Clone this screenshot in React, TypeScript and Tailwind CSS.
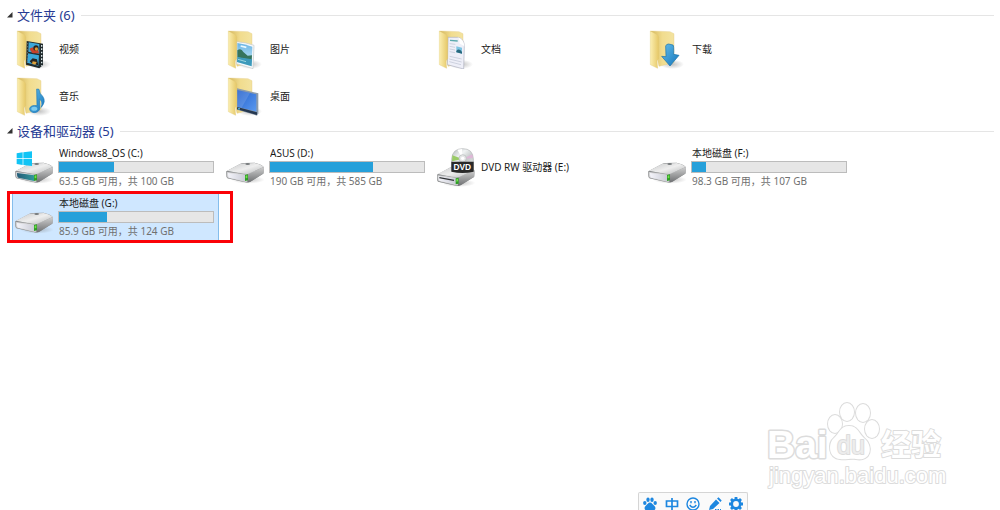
import { useState, type ReactNode } from "react";
import clsx from "clsx";

interface Folder {
  name: string;
  overlay: ReactNode;
}

interface Drive {
  name: string;
  kind: "system" | "disk" | "dvd";
  usedPercent?: number;
  caption?: string;
  marked?: boolean;
}

const VideoOverlay = (
  <g>
    <path d="M35 36 84 44V108L73 118 33 107Z" fill="#202a2c" />
    <path d="M41 40 73 45V74L40 68Z" fill="#3ba8da" />
    <path d="M39 73 72 79 70 110 36 101Z" fill="#3ba8da" />
    <path d="M43 59 53 55 61 60 68 54 72 73 53 73 47 66Z" fill="#c6422c" />
    <circle cx="63" cy="57" r="8" fill="#2a2420" />
    <circle cx="64" cy="60" r="5" fill="#e0992e" />
    <path d="M44 97 53 88 66 91 70 109 51 104Z" fill="#252422" />
    <path d="M53 97 65 99 61 107 51 104Z" fill="#dda13b" />
    <path d="M80 48V110" stroke="#d9e5e8" strokeWidth="4" strokeDasharray="5 5" />
    <path d="M37 42V102" stroke="#637073" strokeWidth="3" strokeDasharray="4 5" />
  </g>
);

const PictureOverlay = (
  <g>
    <path d="M32 38Q60 40 84 49L81 119 31 104Z" fill="#f7f9fa" stroke="#c2c8cc" strokeWidth="2" />
    <path d="M34 42Q58 45 79 53L77 112 33 99Z" fill="url(#sky)" />
    <path d="M34 64Q45 55 52 69L65 80 78 79 77 94 34 85Z" fill="#36745d" />
    <path d="M34 84 78 91 77 112 33 99Z" fill="#3d9abb" />
    <path d="M36 91 60 98" stroke="#9bd6df" strokeWidth="3" />
    <path d="M44 51 61 55" stroke="#e9f8ff" strokeWidth="5" />
  </g>
);

const DocumentOverlay = (
  <g>
    <path d="M33 25H62Q82 29 82 52L80 120 31 107Z" fill="#eeeff8" stroke="#adb1bf" strokeWidth="2" />
    <path d="M62 25Q70 35 67 43L82 52Q80 30 62 25Z" fill="#fff" />
    <path d="M39 34 62 36" stroke="#5ba9ad" strokeWidth="4" />
    <path
      d="M38 44 55 46M38 52 54 55M38 60 54 63M38 68 54 71M38 82 74 90M37 90 74 99M37 98 72 107"
      stroke="#bcc2d2"
      strokeWidth="2"
    />
    <path d="M58 52 75 56V74L58 70Z" fill="#7fc4e2" />
    <path d="M58 66Q66 56 75 69V74L58 70Z" fill="#28687d" />
  </g>
);

const DownloadOverlay = (
  <path
    d="M53 51Q55 45 62 45L75 48Q78 50 77 76L93 79 66 111 41 82 54 83Z"
    fill="url(#arrow)"
    stroke="#176fa8"
    strokeWidth="2"
  />
);

const MusicOverlay = (
  <g fill="url(#arrow)" stroke="#1b78b8" strokeWidth="2">
    <path d="M65 39 72 40Q73 53 83 61Q94 76 79 94Q84 75 73 69L75 97Q71 110 57 110Q43 108 44 97Q48 86 66 89Z" />
    <ellipse cx="58" cy="98" rx="9" ry="6" fill="#7dcbee" stroke="none" />
  </g>
);

const DesktopOverlay = (
  <g>
    <path d="M33 37 97 52V112L93 119 33 101Z" fill="#8c9bab" />
    <path d="M34 42 91 55V107L34 92Z" fill="url(#screen)" />
    <path d="M34 42 72 51 47 95 34 92Z" fill="#fff" opacity=".13" />
    <path d="M34 93 93 109V117L33 100Z" fill="#263850" />
    <circle cx="39" cy="98" r="3" fill="#4cafd8" />
  </g>
);

const folders: Folder[] = [
  { name: "视频", overlay: VideoOverlay },
  { name: "图片", overlay: PictureOverlay },
  { name: "文档", overlay: DocumentOverlay },
  { name: "下载", overlay: DownloadOverlay },
  { name: "音乐", overlay: MusicOverlay },
  { name: "桌面", overlay: DesktopOverlay },
];

const drives: Drive[] = [
  { name: "Windows8_OS (C:)", kind: "system", usedPercent: 36, caption: "63.5 GB 可用，共 100 GB" },
  { name: "ASUS (D:)", kind: "disk", usedPercent: 67, caption: "190 GB 可用，共 585 GB" },
  { name: "DVD RW 驱动器 (E:)", kind: "dvd" },
  { name: "本地磁盘 (F:)", kind: "disk", usedPercent: 9, caption: "98.3 GB 可用，共 107 GB" },
  { name: "本地磁盘 (G:)", kind: "disk", usedPercent: 31, caption: "85.9 GB 可用，共 124 GB", marked: true },
];

// Gradients shared by all the icons
function IconDefs() {
  return (
    <svg className="absolute size-0" aria-hidden="true">
      <defs>
        <linearGradient id="flap">
          <stop offset="0" stopColor="#fbeeb0" />
          <stop offset="1" stopColor="#e6c867" />
        </linearGradient>
        <linearGradient id="back">
          <stop offset="0" stopColor="#d5b75b" />
          <stop offset=".5" stopColor="#f1dc8e" />
          <stop offset="1" stopColor="#f3e3a0" />
        </linearGradient>
        <linearGradient id="sky" x2="0" y2="1">
          <stop offset="0" stopColor="#68b4e5" />
          <stop offset="1" stopColor="#d5eff7" />
        </linearGradient>
        <linearGradient id="arrow" y2="1">
          <stop offset="0" stopColor="#63bdea" />
          <stop offset="1" stopColor="#1677bd" />
        </linearGradient>
        <linearGradient id="screen" y2="1">
          <stop offset="0" stopColor="#2460cc" />
          <stop offset="1" stopColor="#5b9af0" />
        </linearGradient>
        <linearGradient id="metalTop" x2="1" y2="1">
          <stop offset="0" stopColor="#c5c6c7" />
          <stop offset=".5" stopColor="#eeeeee" />
          <stop offset="1" stopColor="#b2b4b5" />
        </linearGradient>
        <linearGradient id="metalSide" x2="0" y2="1">
          <stop offset="0" stopColor="#d0d0d0" />
          <stop offset="1" stopColor="#6e7072" />
        </linearGradient>
        <linearGradient id="panel">
          <stop offset="0" stopColor="#f4f4fa" />
          <stop offset="1" stopColor="#c9cbd5" />
        </linearGradient>
        <linearGradient id="panelTeal">
          <stop offset="0" stopColor="#245c78" />
          <stop offset="1" stopColor="#31999b" />
        </linearGradient>
        <linearGradient id="disc" x2="1" y2="1">
          <stop offset="0" stopColor="#aeb4b6" />
          <stop offset=".35" stopColor="#f1f4f4" />
          <stop offset=".6" stopColor="#c5caca" />
          <stop offset="1" stopColor="#f0f0f0" />
        </linearGradient>
        <radialGradient id="shade">
          <stop offset="0" stopColor="#777" stopOpacity=".45" />
          <stop offset="1" stopColor="#777" stopOpacity="0" />
        </radialGradient>
      </defs>
    </svg>
  );
}

function FolderIcon({ children }: { children: ReactNode }) {
  return (
    <svg viewBox="0 0 120 120" className="size-10 shrink-0" aria-hidden="true">
      <ellipse cx="72" cy="106" rx="36" ry="14" fill="url(#shade)" />
      <path d="M8 6 66 8 78 14V101L33 112Z" fill="url(#back)" stroke="#e0c678" strokeWidth="1" />
      {children}
      <path d="M7 6 28 17Q32 20 32 26V90L27 94 29 118 7 107Z" fill="url(#flap)" stroke="#dfc471" strokeWidth="1" />
    </svg>
  );
}

function DriveBody({ teal }: { teal?: boolean }) {
  return (
    <g>
      <ellipse cx="66" cy="98" rx="50" ry="12" fill="url(#shade)" />
      <path d="M1 73 42 51Q46 48 54 48L86 47Q108 52 114 61L112 80 72 105Q66 108 59 106L4 94Q0 91 1 73Z" fill="#898b8d" />
      <path d="M64 81 114 60 113 79 73 104 64 106Z" fill="url(#metalSide)" />
      <path d="M3 71 43 50 86 48Q105 52 113 60L66 81Q61 83 55 82Z" fill="url(#metalTop)" />
      <ellipse cx="65" cy="51" rx="7" ry="3" fill="#777b7d" />
      <path d="M2 74Q25 76 65 83L64 105Q60 106 53 104L6 93Q1 91 2 74Z" fill="#d8d8da" stroke="#808284" strokeWidth="1" />
      <path d="M6 78 58 85 57 102 10 92Q6 91 6 78Z" fill={teal ? "url(#panelTeal)" : "url(#panel)"} />
      <path d="M57 84 66 82V100L57 102Z" fill="#2e9d25" />
      <path d="M59 86 64 85V93L59 94Z" fill="#72e04d" />
    </g>
  );
}

function DriveIcon({ kind }: { kind: Drive["kind"] }) {
  return (
    <svg viewBox="0 0 120 120" className="size-10 shrink-0" aria-hidden="true">
      {kind === "dvd" ? (
        <>
          <g transform="translate(-1 10)">
            <DriveBody />
            <path d="M8 82 52 90" stroke="#2f3234" strokeWidth="4" />
          </g>
          <path d="M44 36Q46 5 77 5T109 36V70H44Z" fill="url(#disc)" stroke="#aeb1b2" strokeWidth="2" />
          <path d="M77 36 46 25 45 43Z" fill="#9acb67" />
          <path d="M77 36 61 8 75 6Z" fill="#fff" />
          <path d="M77 36 106 22 108 33Z" fill="#dfb7d7" />
          <circle cx="77" cy="34" r="11" fill="#e5e7e7" stroke="#b5b9ba" strokeWidth="2" />
          <circle cx="77" cy="34" r="5" fill="#fff" />
          <path d="M43 44H110V74Q76 82 43 74Z" fill="#292929" />
          <text x="76" y="69" textAnchor="middle" fill="#fff" className="font-['Liberation_Sans'] text-[25px] font-bold">
            DVD
          </text>
        </>
      ) : (
        <>
          <DriveBody teal={kind === "system"} />
          {kind === "system" && (
            <path d="M5 19 23 16V34H5ZM25 16 51 13V34H25ZM5 36H23V54L5 51ZM25 36H51V57L25 54Z" fill="#11c4f5" />
          )}
        </>
      )}
    </svg>
  );
}

function Section({ title, children }: { title: string; children: ReactNode }) {
  const [open, setOpen] = useState(true);

  return (
    <section>
      <h2 className="flex h-[22px] items-center gap-1.5 pr-1.5">
        <button
          type="button"
          aria-expanded={open}
          onClick={() => setOpen(!open)}
          className="flex items-center gap-1 text-[13px] leading-5 text-[#263a93]"
        >
          <svg viewBox="0 0 6 6" className={clsx("size-1.5", !open && "-rotate-45")} aria-hidden="true">
            <path d="M5.5 0V5.5H0Z" fill="#333" />
          </svg>
          {title}
        </button>
        <span className="h-px flex-1 bg-[#e5e5e5]" />
      </h2>
      {open && children}
    </section>
  );
}

function DriveTile({ drive, selected, onSelect }: { drive: Drive; selected: boolean; onSelect: () => void }) {
  return (
    <div className="relative mr-1">
      <button
        type="button"
        onClick={onSelect}
        className={clsx(
          "flex h-12 w-full items-center gap-1 border pl-0.5 text-left",
          selected ? "border-[#84bdec] bg-[#cfe7ff]" : "border-transparent"
        )}
      >
        <DriveIcon kind={drive.kind} />
        <span className="flex min-w-0 flex-1 flex-col pr-1">
          <span className="truncate leading-4">{drive.name}</span>
          {drive.usedPercent !== undefined && (
            <span
              role="meter"
              aria-label={drive.name}
              aria-valuenow={drive.usedPercent}
              className="-ml-px block h-3 border border-[#bcbcbc] bg-[#e6e6e6]"
            >
              <span className="block h-full bg-[#26a0da]" style={{ width: `${drive.usedPercent}%` }} />
            </span>
          )}
          {drive.caption && <span className="truncate leading-4 text-[#707070]">{drive.caption}</span>}
        </span>
      </button>
      {drive.marked && (
        <div className="pointer-events-none absolute -top-0.5 -right-3.5 -bottom-0.5 -left-[5px] border-3 border-[#fb0207]" />
      )}
    </div>
  );
}

function Watermark() {
  return (
    <svg
      viewBox="0 0 190 94"
      className="pointer-events-none absolute right-[50px] bottom-[18px] w-[190px]"
      role="img"
      aria-label="Baidu 经验"
    >
      <g fill="#fff" stroke="#dcdcdc" strokeWidth="2" strokeLinejoin="round" paintOrder="stroke">
        <text x="7" y="60" strokeWidth="3" className="font-['Liberation_Sans'] text-[39px] font-bold">
          Bai
        </text>
        <ellipse cx="75" cy="26" rx="7" ry="9" />
        <ellipse cx="87" cy="14" rx="7" ry="9" />
        <ellipse cx="103" cy="15" rx="7" ry="9" />
        <ellipse cx="112" cy="31" rx="7" ry="9" />
        <path d="M89 28C80 28 79 36 74 40C68 45 68 60 80 61C85 62 92 60 96 61C111 64 114 48 104 40C99 36 98 28 89 28Z" />
        <text x="77" y="56" fill="#ededed" className="font-['Liberation_Sans'] text-[25px]">
          du
        </text>
        <text x="121" y="57" className="font-['Noto_Sans_CJK_SC'] text-[30px] font-bold">
          经验
        </text>
        <text x="9" y="85" className="font-['Liberation_Sans'] text-[22px]">
          jingyan.baidu.com
        </text>
      </g>
    </svg>
  );
}

function InputToolbar() {
  const button = "flex size-[14px] items-center justify-center";

  return (
    <div
      role="toolbar"
      className="absolute right-[252px] bottom-0 flex h-[18px] w-[110px] items-center justify-between rounded-t-xs border border-b-0 border-[#d5d5d5] bg-[#fafafa] px-1 pt-1 text-[#1d87e0]"
    >
      <button type="button" aria-label="百度输入法" className={button}>
        <svg viewBox="0 0 14 14" className="size-full" fill="currentColor">
          <ellipse cx="1.8" cy="6" rx="1.7" ry="2" />
          <ellipse cx="5" cy="2.8" rx="1.7" ry="2.2" />
          <ellipse cx="9" cy="2.8" rx="1.7" ry="2.2" />
          <ellipse cx="12.200" cy="6" rx="1.7" ry="2" />
          <path d="M7 5.500C5 5.500 4.500 7.500 3 8.500C.5 10.500 1.500 13.500 4 13.500H10C12.500 13.500 13.500 10.500 11 8.500C9.500 7.500 9 5.500 7 5.500Z" />
        </svg>
      </button>
      <button type="button" aria-label="中文" className={button}>
        <svg viewBox="0 0 14 14" className="size-full" fill="none" stroke="currentColor" strokeWidth="1.7">
          <path d="M1.5 4H12.5V9.5H1.5ZM7 1V14" />
        </svg>
      </button>
      <button type="button" aria-label="表情" className={button}>
        <svg viewBox="0 0 14 14" className="size-full" fill="none" stroke="currentColor" strokeWidth="1.4">
          <circle cx="7" cy="7" r="6" />
          <path d="M3.7 8Q7 12.5 10.3 8M5 4V6.2M9 4V6.2" />
        </svg>
      </button>
      <button type="button" aria-label="手写" className={button}>
        <svg viewBox="0 0 14 14" className="size-full" fill="currentColor">
          <path d="M1 13 2 9 8 2.500 11.500 6 5 12ZM9 1.500 10.500 .3 13.700 3.500 12.500 5Z" />
          <path d="M7 12.5H13" stroke="currentColor" strokeDasharray="1.5 1" />
        </svg>
      </button>
      <button type="button" aria-label="设置" className={button}>
        <svg viewBox="0 0 14 14" className="size-full" fill="none" stroke="currentColor">
          <circle cx="7" cy="7" r="4.2" strokeWidth="2.6" />
          <path
            d="M7 0V2.5M7 11.5V14M0 7H2.500M11.5 7H14M2 2 4 4M10 10 12 12M12 2 10 4M4 10 2 12"
            strokeWidth="2.8"
          />
        </svg>
      </button>
    </div>
  );
}

export default function App() {
  const [selected, setSelected] = useState("本地磁盘 (G:)");

  return (
    <main className="relative flex min-h-screen flex-col gap-px overflow-hidden bg-white pt-1 pl-[7px] font-['Noto_Sans','Noto_Sans_CJK_SC',sans-serif] text-[10px] text-[#1a1a1a]">
      <IconDefs />
      <Section title="文件夹 (6)">
        <div className="grid grid-cols-[repeat(auto-fill,211px)] gap-y-px pl-[5px]">
          {folders.map((folder) => (
            <button
              key={folder.name}
              type="button"
              onClick={() => setSelected(folder.name)}
              className={clsx(
                "mr-1 flex h-[46px] items-center gap-1 border pl-0.5 text-left",
                selected === folder.name ? "border-[#84bdec] bg-[#cfe7ff]" : "border-transparent"
              )}
            >
              <FolderIcon>{folder.overlay}</FolderIcon>
              {folder.name}
            </button>
          ))}
        </div>
      </Section>
      <Section title="设备和驱动器 (5)">
        <div className="grid grid-cols-[repeat(auto-fill,211px)] gap-y-0.5 pt-px pl-[5px]">
          {drives.map((drive) => (
            <DriveTile
              key={drive.name}
              drive={drive}
              selected={selected === drive.name}
              onSelect={() => setSelected(drive.name)}
            />
          ))}
        </div>
      </Section>
      <Watermark />
      <InputToolbar />
    </main>
  );
}
